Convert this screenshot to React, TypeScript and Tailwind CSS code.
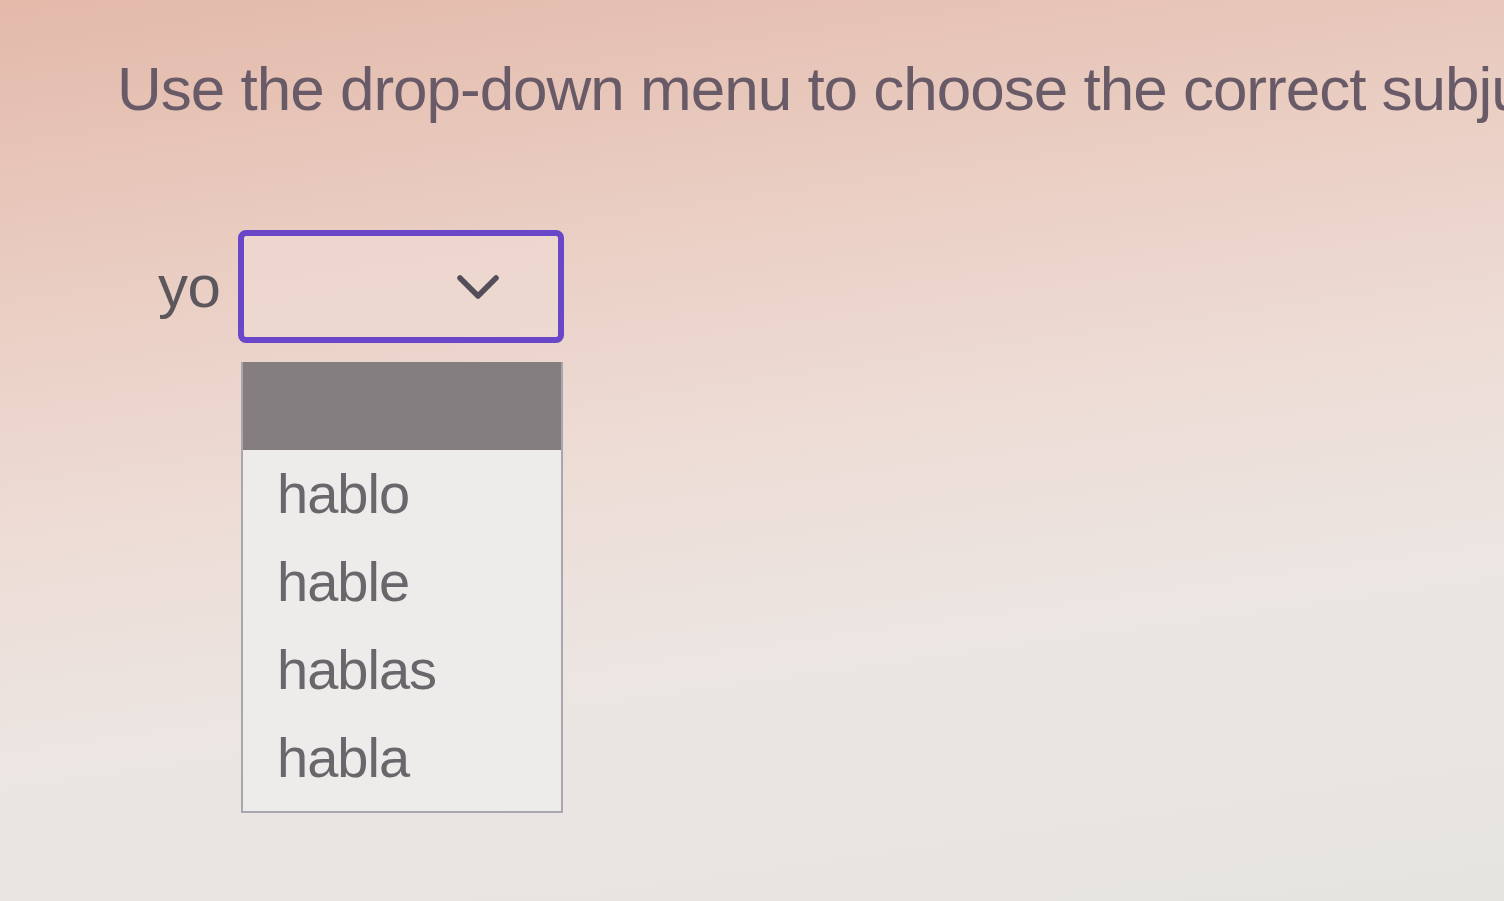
const options = ["hablo", "hable", "hablas", "habla"];

export default function App() {
  return (
    <div
      className="h-[901px] w-[1504px] overflow-hidden bg-[linear-gradient(172deg,#e3b9aa_0%,#eacdc2_26%,#eddcd5_48%,#ece6e3_70%,#e6e4e1_100%)] pl-[117px] pt-[58px]"
      style={{ fontFamily: '"Liberation Sans", Arial, sans-serif' }}
    >
      <h1 className="whitespace-nowrap text-[62px] leading-none tracking-[-1px] text-[#685b67]">
        Use the drop-down menu to choose the correct subjunctive form.
      </h1>

      <div className="mt-[110px] flex items-center gap-[18px] pl-[41px]">
        <span className="text-[60px] leading-none tracking-[-0.5px] text-[#5c565d]">yo</span>
        <div className="flex h-[113px] w-[326px] items-center justify-end rounded-[8px] border-[6px] border-[#6a47c9] bg-[#efdcd6]/60 pr-[58px]">
          <svg width="44" height="28" viewBox="0 0 44 28" fill="none">
            <path
              d="M4 5 L22 23 L40 5"
              stroke="#544d5a"
              strokeWidth="5.5"
              strokeLinecap="round"
              strokeLinejoin="round"
            />
          </svg>
        </div>
      </div>

      <div className="ml-[124px] mt-[19px] flex w-[322px] flex-col border-2 border-t-0 border-[#a9a7ad] bg-[#eeecea]">
        <div className="h-[88px] bg-[#857e80]" />
        <ul className="pb-[9px]">
          {options.map((o) => (
            <li
              key={o}
              className="flex h-[88px] items-center pl-[34px] text-[56px] leading-none tracking-[-1px] text-[#69666c]"
            >
              {o}
            </li>
          ))}
        </ul>
      </div>
    </div>
  );
}
